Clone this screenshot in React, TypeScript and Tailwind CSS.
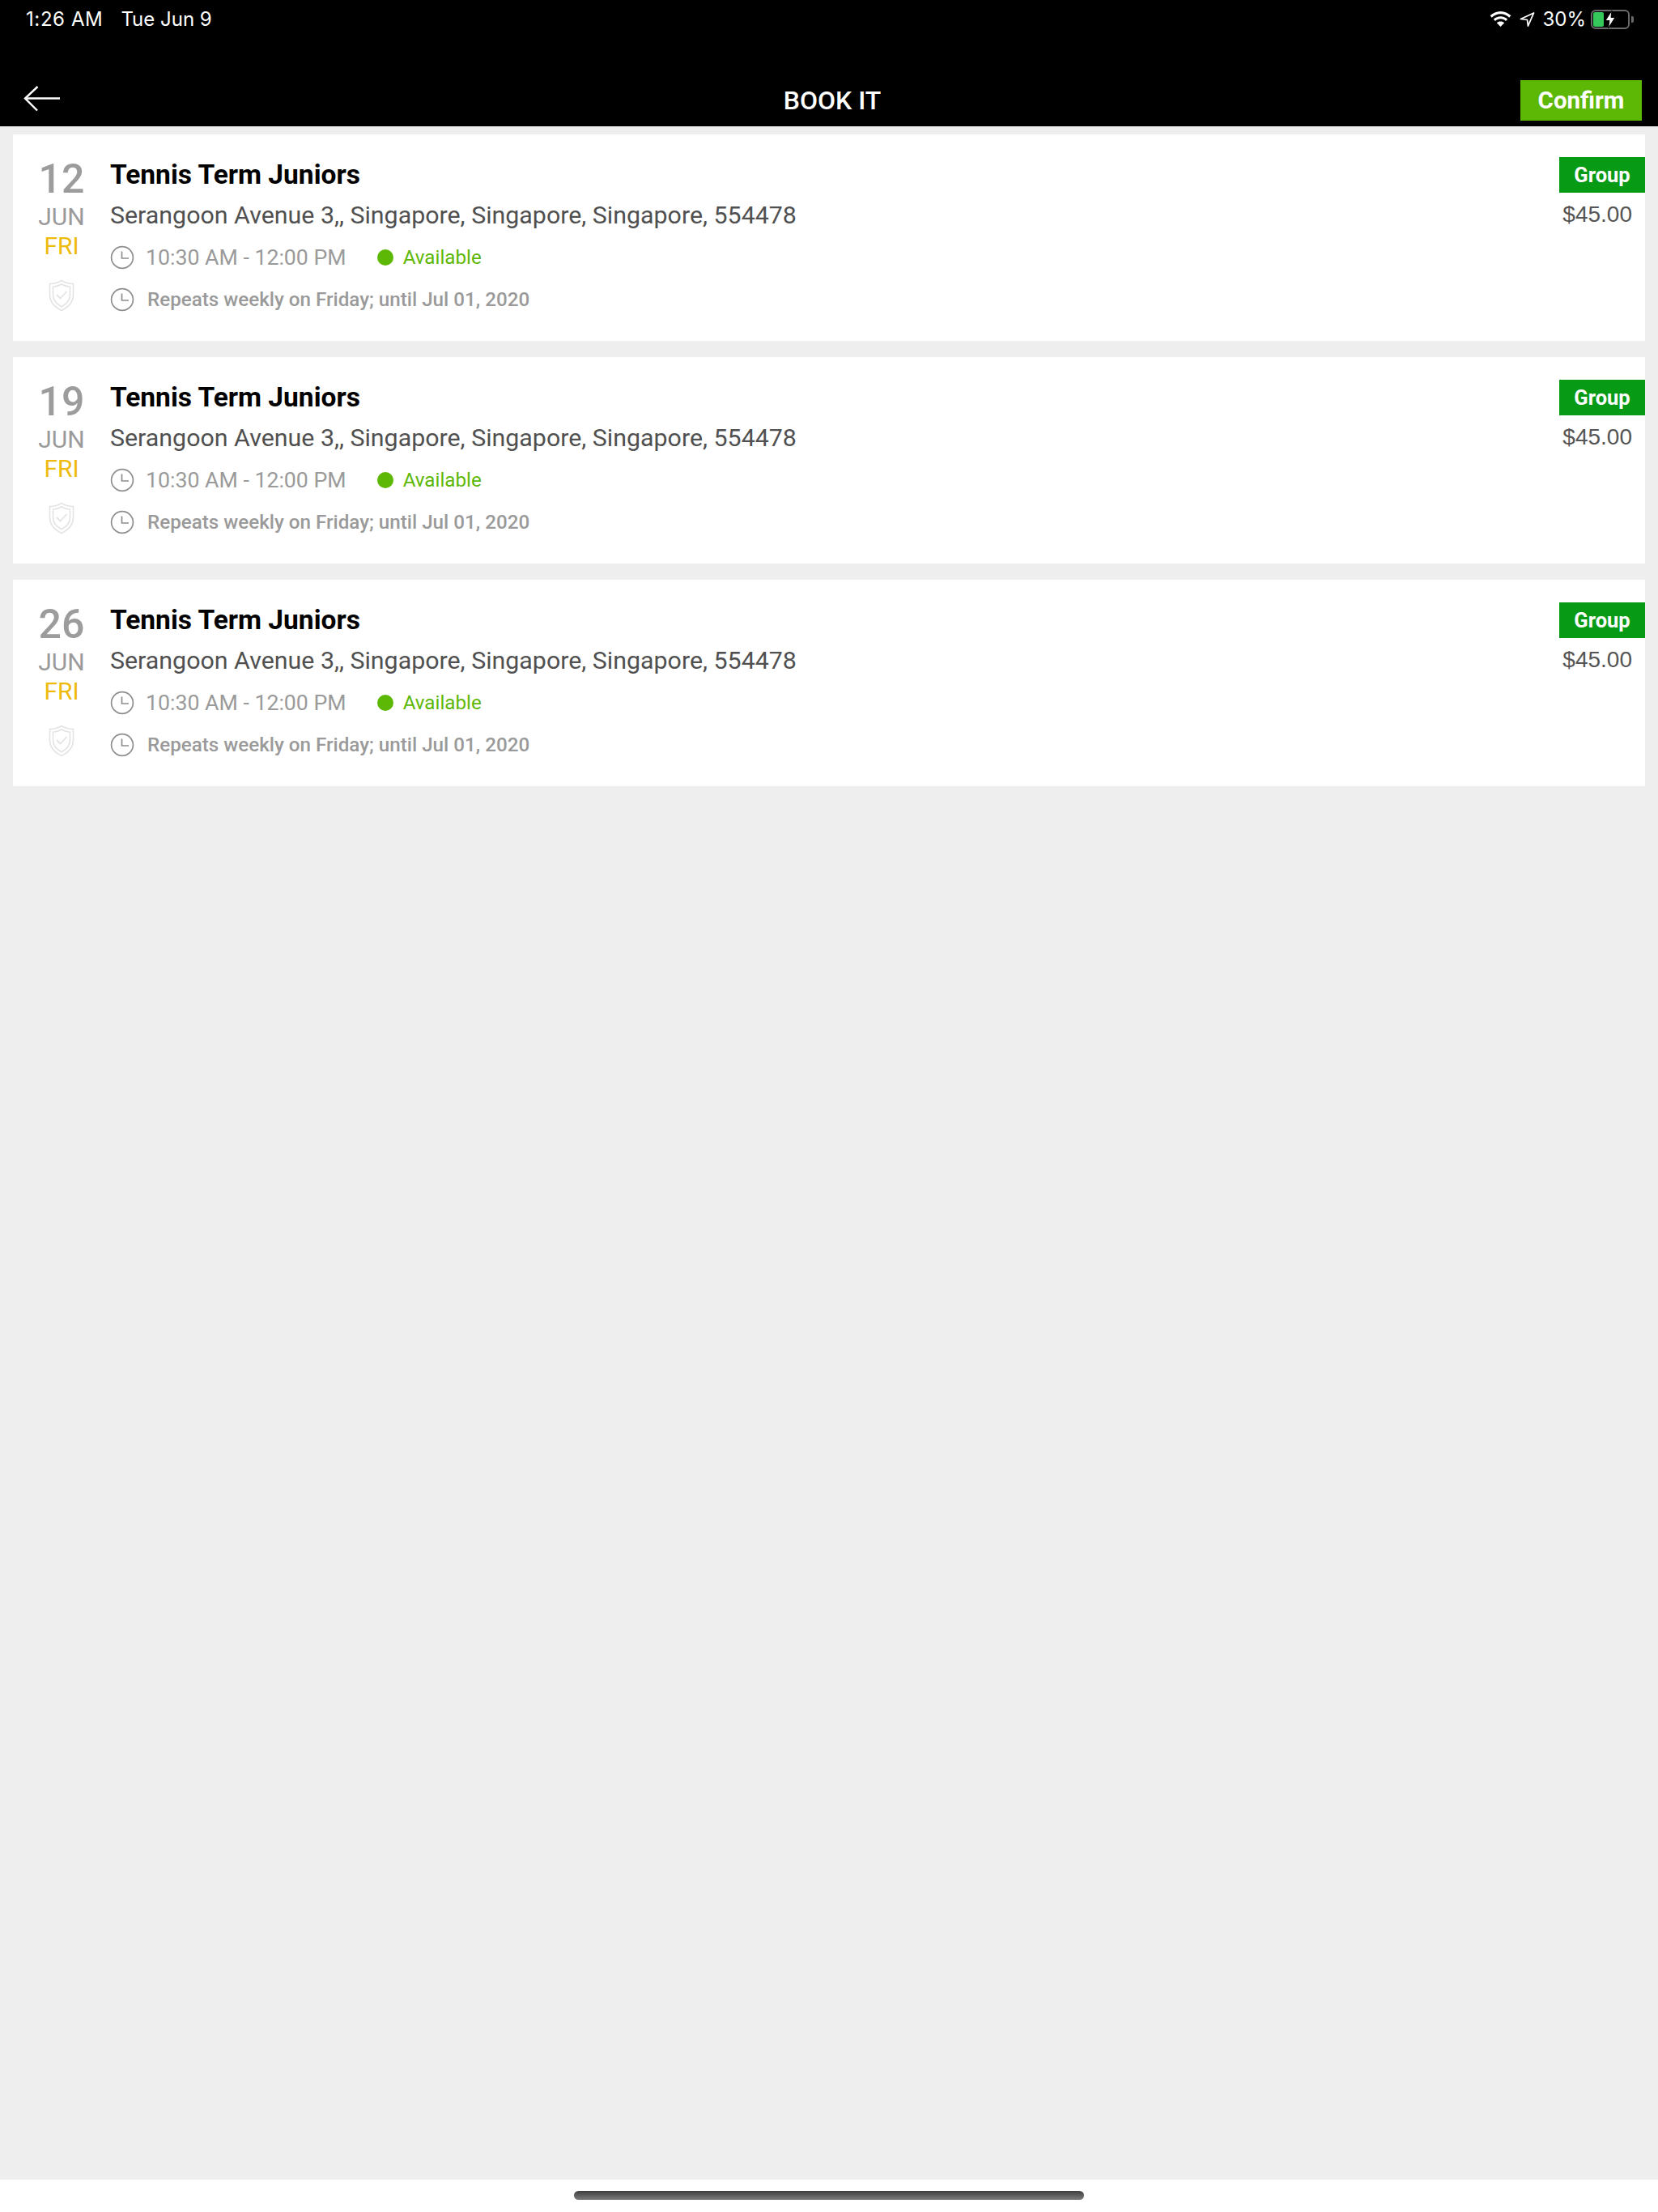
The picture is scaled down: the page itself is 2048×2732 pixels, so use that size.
const Clock = () => (
  <svg width="30" height="30" viewBox="0 0 30 30" fill="none" stroke="#8e8e8e" strokeWidth="1.7" className="shrink-0">
    <circle cx="15" cy="15" r="13.4" />
    <path d="M14.5 7.5V16H23" />
  </svg>
);

const Shield = () => (
  <svg width="32" height="40" viewBox="0 0 32 40" fill="none" stroke="#e3e3e3" strokeWidth="1.6" strokeLinejoin="round" strokeLinecap="round">
    <path d="M16 1.5C20 4 25.5 5.5 30.5 5.5V19C30.5 28 24 34.5 16 38.5C8 34.5 1.5 28 1.5 19V5.5C6.5 5.5 12 4 16 1.5Z" />
    <path d="M16 6C19.5 8 23 9 26.5 9.2V19C26.500 26 22 30.500 16 33.800C10 30.500 5.500 26 5.500 19V9.200C9 9 12.500 8 16 6Z" />
    <path d="M10.500 19.500L14.500 23.500L22 15.500" strokeWidth="1.8" />
  </svg>
);

const Card = ({ day }: { day: string }) => (
  <div className="flex h-[255px] bg-white">
    <div className="flex w-[120px] shrink-0 flex-col items-center pt-[26px] font-['Roboto',sans-serif]">
      <div className="h-[58px] text-[50px] leading-[58px] font-medium text-[#9c9c9c]">{day}</div>
      <div className="h-[35px] text-[30px] leading-[35px] text-[#9a9a9a]">JUN</div>
      <div className="mt-[1px] h-[35px] text-[30px] leading-[35px] text-[#eeba0c]">FRI</div>
      <div className="mt-[24px]"><Shield /></div>
    </div>
    <div className="flex min-w-0 flex-1 flex-col pt-[29px] font-['Roboto',sans-serif]">
      <div className="h-[42px] text-[33.5px] leading-[42px] font-bold text-black">Tennis Term Juniors</div>
      <div className="mt-[10px] h-[38px] text-[30.36px] leading-[38px] text-[#505050]">Serangoon Avenue 3,, Singapore, Singapore, Singapore, 554478</div>
      <div className="mt-[16px] flex h-[34px] items-center">
        <Clock />
        <span className="ml-[14px] text-[26.7px] leading-[34px] text-[#9a9a9a]">10:30 AM - 12:00 PM</span>
        <span className="ml-[38px] h-[20px] w-[20px] rounded-full bg-[#5cb805]" />
        <span className="ml-[12px] text-[24.2px] leading-[34px] text-[#5cb805]">Available</span>
      </div>
      <div className="mt-[18px] flex h-[34px] items-center">
        <Clock />
        <span className="ml-[16px] text-[24.2px] leading-[34px] font-medium text-[#9a9a9a]">Repeats weekly on Friday; until Jul 01, 2020</span>
      </div>
    </div>
    <div className="flex w-[120px] shrink-0 flex-col items-end pt-[28px]">
      <div className="flex h-[44px] w-[106px] items-center justify-center bg-[#069a15] font-['Roboto',sans-serif] text-[25.5px] font-bold text-white">Group</div>
      <div className="mt-[10px] mr-[16px] font-['Liberation_Sans',sans-serif] text-[28px] leading-[34px] text-[#555555]">$45.00</div>
    </div>
  </div>
);

export default function App() {
  return (
    <div className="flex h-[2732px] w-[2048px] flex-col bg-[#eeeeee]">
      <header className="h-[156px] shrink-0 bg-black text-white">
        <div className="flex h-[48px] items-center justify-between pr-[30px] pl-[32px] font-['Inter',sans-serif] text-[24px] leading-[48px]">
          <div className="flex gap-[22px]">
            <span className="tracking-[0.6px]">1:26 AM</span>
            <span>Tue Jun 9</span>
          </div>
          <div className="flex items-center">
            <svg width="29" height="21" viewBox="0 0 28 22" fill="white">
              <path d="M14 0C8.700 0 4 2.200.5 5.600l2.300 2.400C5.700 5.200 9.600 3.400 14 3.400S22.300 5.200 25.200 8l2.300-2.400C24 2.200 19.300 0 14 0Z" />
              <path d="M14 6.500c-3.500 0-6.700 1.400-9.100 3.700l2.300 2.400c1.800-1.700 4.200-2.800 6.800-2.800s5 1.100 6.800 2.800l2.300-2.400C20.700 7.900 17.500 6.500 14 6.500Z" />
              <path d="M14 13c-2 0-3.600.7-4.900 1.900L14 20l4.900-5.100C17.600 13.700 16 13 14 13Z" />
            </svg>
            <svg width="19" height="20" viewBox="0 0 20 20" fill="none" stroke="white" strokeWidth="1.800" strokeLinejoin="round" className="ml-[9px]">
              <path d="M18.500 1.500L1.500 9.500L10 10.500L11 18.500Z" />
            </svg>
            <span className="ml-[9px]">30%</span>
            <div className="relative ml-[6px] h-[24px] w-[48px] rounded-[6px] border-[2px] border-[#6a6a6a]">
              <div className="absolute top-[1px] left-[1px] h-[18px] w-[13px] rounded-[2px] bg-[#34c759]" />
              <svg width="14" height="24" viewBox="0 0 14 24" fill="white" stroke="black" strokeWidth="1" className="absolute top-[-2px] left-[15px]">
                <path d="M9 1L1 13.500H6L4.500 23L13 9.500H8Z" />
              </svg>
            </div>
            <div className="ml-[2px] h-[8px] w-[3px] rounded-r-[2px] bg-[#6a6a6a]" />
          </div>
        </div>
        <div className="relative mt-[51px] flex h-[50px] items-center justify-end pr-[20px]">
          <svg width="46" height="32" viewBox="0 0 46 32" fill="none" stroke="white" strokeWidth="2.400" className="absolute top-[7px] left-[29px]">
            <path d="M45 15.500H2" />
            <path d="M17.500 1L2 15.500L17 30.500" />
          </svg>
          <div className="absolute inset-x-0 top-0 text-center font-['Roboto',sans-serif] text-[32px] leading-[50px] font-medium">
            <span className="relative left-[4px]">BOOK IT</span>
          </div>
          <div className="relative flex h-[50px] w-[150px] items-center justify-center bg-[#5cb805] font-['Roboto',sans-serif] text-[29.5px] font-bold">Confirm</div>
        </div>
      </header>
      <main className="mt-[10px] flex flex-1 flex-col gap-[20px] px-[16px]">
        <Card day="12" />
        <Card day="19" />
        <Card day="26" />
      </main>
      <footer className="flex h-[40px] shrink-0 justify-center bg-white pt-[14px]">
        <div className="h-[11px] w-[630px] rounded-full bg-gradient-to-b from-[#3f3f3f] to-[#7d7d7d]" />
      </footer>
    </div>
  );
}
